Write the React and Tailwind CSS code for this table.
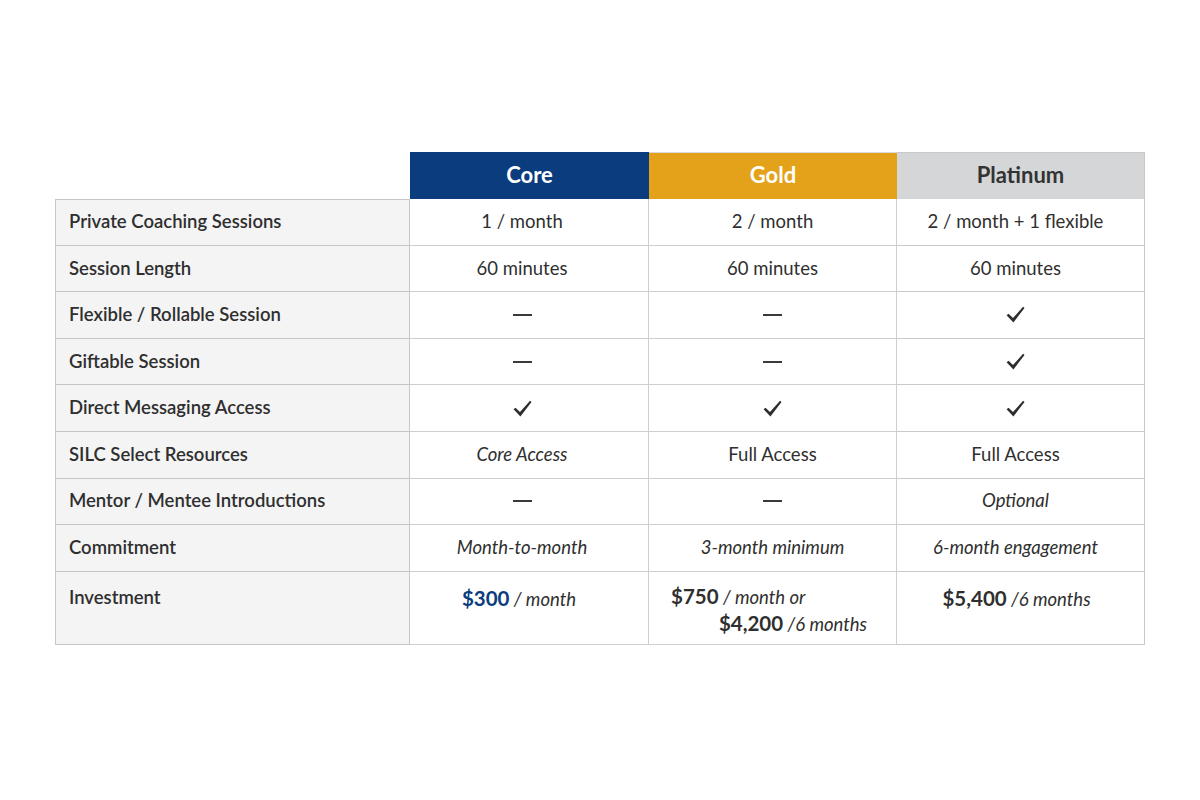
import React from "react";

const Check = () => (
  <svg width="21" height="21" viewBox="0 0 20 20" className="inline-block">
    <path d="M1.5 10.8 L3.4 9.2 L7.6 13.4 L17.2 2.6 L18.6 3.8 L8 17.6 Z" fill="#2e2e2e" />
  </svg>
);

const Dash = () => <span className="inline-block w-[19px] h-[2px] bg-[#3a3a3a] align-middle" />;

const rows = [
  ["Private Coaching Sessions", "1 / month", "2 / month", "2 / month + 1 flexible"],
  ["Session Length", "60 minutes", "60 minutes", "60 minutes"],
  ["Flexible / Rollable Session", "dash", "dash", "check"],
  ["Giftable Session", "dash", "dash", "check"],
  ["Direct Messaging Access", "check", "check", "check"],
  ["SILC Select Resources", "i:Core Access", "Full Access", "Full Access"],
  ["Mentor / Mentee Introductions", "dash", "dash", "i:Optional"],
  ["Commitment", "i:Month-to-month", "i:3-month minimum", "i:6-month engagement"],
];

function Val({ v }) {
  if (v === "dash") return <Dash />;
  if (v === "check") return <Check />;
  if (v.startsWith("i:")) return <span className="italic">{v.slice(2)}</span>;
  return <span>{v}</span>;
}

export default function App() {
  return (
    <div
      className="w-[1200px] h-[800px] bg-white pt-[152px] text-[#2f2f2f]"
      style={{ fontFamily: "Lato, 'Noto Sans', sans-serif" }}
    >
      <div className="mx-auto w-[1090px] grid grid-cols-[355px_239px_248px_248px]">
        <div />
        <div className="h-[47px] bg-[#0b3c7e] flex items-center justify-center pb-[3px] text-white font-bold text-[22px]">
          Core
        </div>
        <div className="h-[47px] bg-[#e3a219] border-t border-[#d9d9d9] flex items-center justify-center pb-[3px] text-white font-bold text-[22px]">
          Gold
        </div>
        <div className="h-[47px] bg-[#d5d6d8] border-t border-r border-[#c9c9c9] flex items-center justify-center pb-[3px] text-[#333] font-bold text-[22px]">
          Platinum
        </div>

        {rows.map((r, i) => (
          <React.Fragment key={i}>
            <div
              className={`h-[46.6px] bg-[#f4f4f4] border-l border-r border-b border-[#c6c6c6] ${i === 0 ? "border-t" : ""} flex items-center pl-[13px] font-semibold text-[18.5px]`}
            >
              {r[0]}
            </div>
            <div className="h-[46.6px] border-b border-r border-[#cfcfcf] flex items-center justify-center pr-[14px] text-[18.5px]">
              <Val v={r[1]} />
            </div>
            <div className="h-[46.6px] border-b border-r border-[#cfcfcf] flex items-center justify-center text-[18.5px]">
              <Val v={r[2]} />
            </div>
            <div className="h-[46.6px] border-b border-r border-[#c9c9c9] flex items-center justify-center pr-[10px] text-[18.5px]">
              <Val v={r[3]} />
            </div>
          </React.Fragment>
        ))}

        <div className="h-[73px] bg-[#f4f4f4] border-l border-r border-b border-[#c6c6c6] pl-[13px] pt-[12px] font-semibold text-[18.5px]">
          Investment
        </div>
        <div className="h-[73px] border-b border-r border-[#cfcfcf] pt-[11px] pr-[20px] text-center text-[18.5px]">
          <span className="font-bold text-[20.5px] text-[#0b3c7e]">$300</span>
          <span className="italic"> / month</span>
        </div>
        <div className="h-[73px] border-b border-r border-[#cfcfcf] pt-[11px] flex flex-col text-[18.5px] leading-[26px]">
          <div className="self-start ml-[22px]">
            <span className="font-bold text-[20.5px]">$750</span>
            <span className="italic"> / month or</span>
          </div>
          <div className="self-end mr-[29px]">
            <span className="font-bold text-[20.5px]">$4,200</span>
            <span className="italic"> /6 months</span>
          </div>
        </div>
        <div className="h-[73px] border-b border-r border-[#c9c9c9] pt-[11px] pr-[8px] text-center text-[18.5px]">
          <span className="font-bold text-[20.5px]">$5,400</span>
          <span className="italic"> /6 months</span>
        </div>
      </div>
    </div>
  );
}
